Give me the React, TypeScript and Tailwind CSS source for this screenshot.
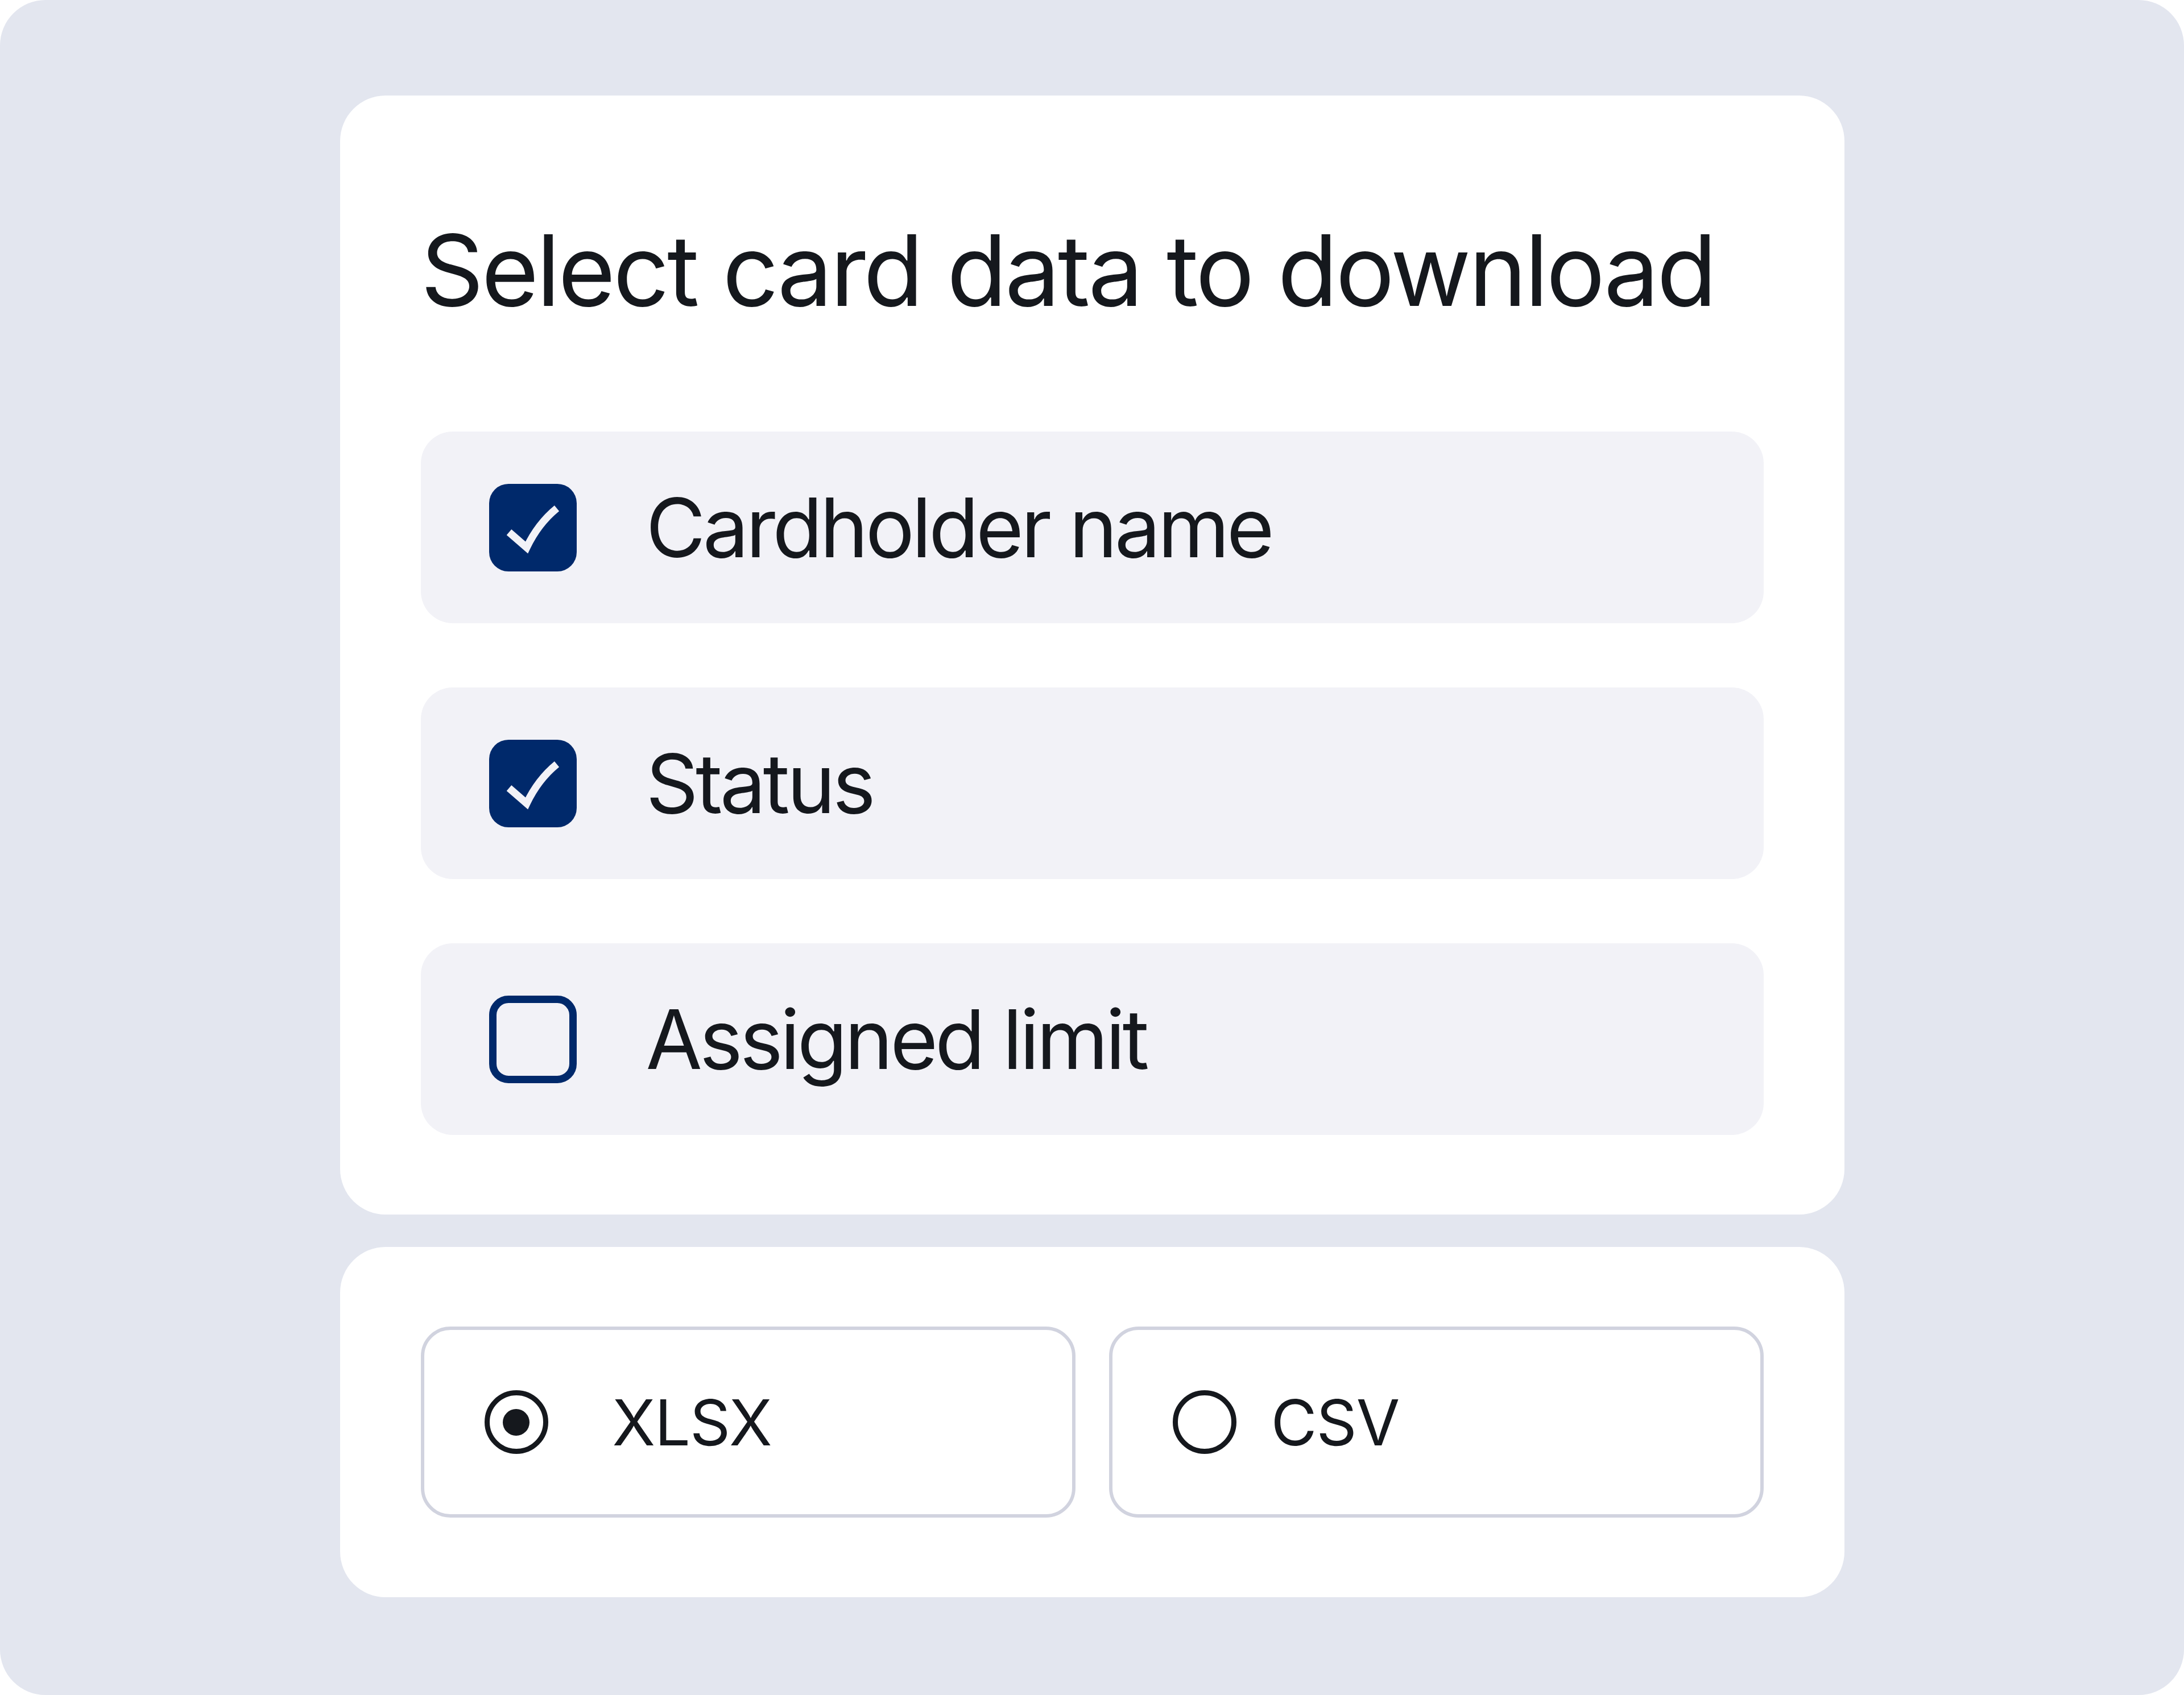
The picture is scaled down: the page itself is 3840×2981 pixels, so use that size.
import React from "react";

function CheckBox({ checked }: { checked: boolean }) {
  if (checked) {
    return (
      <div className="w-[154px] h-[154px] shrink-0 rounded-[34px] bg-[#00296b] flex items-center justify-center">
        <svg width="154" height="154" viewBox="0 0 154 154" fill="none">
          <path
            d="M35 85 L66 112 Q86 70 119 43"
            stroke="#f2f2f7"
            strokeWidth="13"
            strokeLinejoin="miter"
            strokeLinecap="butt"
            fill="none"
          />
        </svg>
      </div>
    );
  }
  return (
    <div className="w-[154px] h-[154px] shrink-0 rounded-[34px] border-[13px] border-[#00296b] bg-[#f2f2f7]" />
  );
}

function Row({ label, checked }: { label: string; checked: boolean }) {
  return (
    <div className="h-[337px] rounded-[56px] bg-[#f2f2f7] flex items-center pl-[120px]">
      <CheckBox checked={checked} />
      <span className="ml-[122px] text-[144px] leading-none text-[#15181d] tracking-[-5px]">{label}</span>
    </div>
  );
}

function Radio({ label, selected, gap }: { label: string; selected: boolean; gap: string }) {
  return (
    <div className="h-[336px] rounded-[52px] border-[6px] border-[#d1d3df] bg-white flex items-center pl-[106px]">
      <div className="w-[112px] h-[112px] shrink-0 rounded-full border-[9px] border-[#15181d] flex items-center justify-center">
        {selected && <div className="w-[47px] h-[47px] rounded-full bg-[#15181d]" />}
      </div>
      <span className={`${gap} text-[111px] leading-none text-[#15181d] tracking-[-1px]`}>{label}</span>
    </div>
  );
}

export default function App() {
  return (
    <div className="w-[3840px] h-[2981px] bg-white font-['Inter','Noto_Sans',sans-serif]">
      <div className="w-full h-full rounded-[80px] bg-[#e3e6ef] flex flex-col items-center pt-[168px]">
        <div className="w-[2645px] bg-white rounded-[80px] px-[142px] pt-[221px] pb-[140px]">
          <h1 className="text-[173px] leading-none font-normal text-[#15181d] tracking-[-4px]">
            Select card data to download
          </h1>
          <div className="mt-[197px] flex flex-col gap-[113px]">
            <Row label="Cardholder name" checked={true} />
            <Row label="Status" checked={true} />
            <Row label="Assigned limit" checked={false} />
          </div>
        </div>
        <div className="mt-[57px] w-[2645px] bg-white rounded-[80px] px-[142px] py-[140px]">
          <div className="grid grid-cols-2 gap-[59px]">
            <Radio label="XLSX" selected={true} gap="ml-[113px]" />
            <Radio label="CSV" selected={false} gap="ml-[61px]" />
          </div>
        </div>
      </div>
    </div>
  );
}
